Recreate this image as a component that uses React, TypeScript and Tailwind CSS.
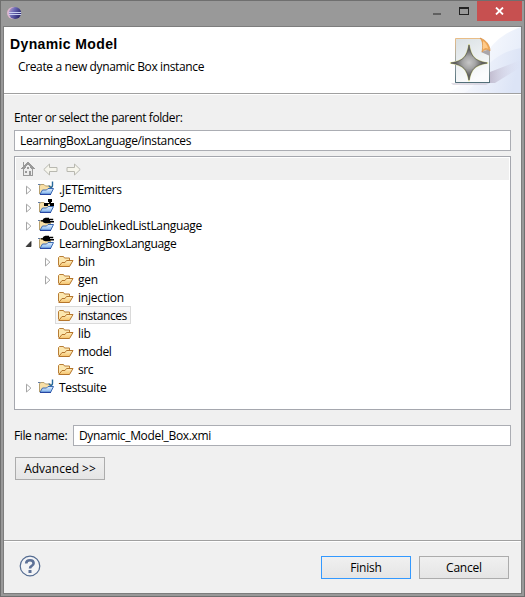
import React from "react";

const ui = "font-['Open_Sans','Noto_Sans',sans-serif]";

function EclipseIcon() {
  return (
    <svg width="15" height="14" viewBox="0 0 15 14">
      <defs>
        <linearGradient id="ecl" x1="0" y1="0" x2="1" y2="0.5">
          <stop offset="0" stopColor="#c9a4cc" />
          <stop offset="0.45" stopColor="#6a69b4" />
          <stop offset="1" stopColor="#2b2670" />
        </linearGradient>
      </defs>
      <ellipse cx="6.2" cy="6" rx="6.2" ry="6" fill="#dcb6cd" />
      <ellipse cx="8" cy="6" rx="6.2" ry="6" fill="url(#ecl)" />
      <path d="M1.8 5.5h12.4M1.8 7.5h12.4" stroke="#c9d0f0" strokeWidth="1" />
    </svg>
  );
}

function Banner() {
  return (
    <svg className="block" width="81" height="66" viewBox="0 0 81 66">
      <defs>
        <linearGradient id="bg1" x1="0" y1="0" x2="1" y2="0.3">
          <stop offset="0" stopColor="#ffffff" />
          <stop offset="0.4" stopColor="#fafbfe" />
          <stop offset="1" stopColor="#e8eefa" />
        </linearGradient>
        <linearGradient id="bg2" x1="0" y1="0" x2="1" y2="0.2">
          <stop offset="0" stopColor="#f9fafe" />
          <stop offset="1" stopColor="#dce4f6" />
        </linearGradient>
        <linearGradient id="shade" x1="0" y1="0" x2="1" y2="0">
          <stop offset="0" stopColor="#a99db5" stopOpacity="0.6" />
          <stop offset="1" stopColor="#d8d5eb" stopOpacity="0" />
        </linearGradient>
        <linearGradient id="page" x1="0" y1="0" x2="0.4" y2="1">
          <stop offset="0" stopColor="#d9e0e3" />
          <stop offset="1" stopColor="#fbfcfd" />
        </linearGradient>
        <linearGradient id="edge" x1="0" y1="0" x2="0" y2="1">
          <stop offset="0" stopColor="#e9bd87" />
          <stop offset="0.5" stopColor="#9ba6a7" />
          <stop offset="1" stopColor="#526f79" />
        </linearGradient>
        <radialGradient id="star">
          <stop offset="0" stopColor="#c6c6c6" />
          <stop offset="0.35" stopColor="#a6a6a6" />
          <stop offset="0.7" stopColor="#686868" />
          <stop offset="1" stopColor="#484848" />
        </radialGradient>
      </defs>
      <path d="M81 0C64 6 54 14 46 27C36 45 23 60 6 66H81Z" fill="url(#bg1)" />
      <path d="M81 21C63 24 50 33 40 48C36 56 31 62 24 66H81Z" fill="url(#bg2)" />
      <path d="M50 56V45L81 33V40L55 56Z" fill="url(#shade)" />
      <path d="M11 56h39l-4 2H13Z" fill="#c6bdcb" opacity=".5" />
      <path d="M15.5 11.5H41L49.5 25V55.5H15.5Z" fill="url(#page)" stroke="url(#edge)" />
      <path d="M15.5 55.5H50" stroke="#526f79" />
      <path d="M41 25L50 29V22Z" fill="#aaa6aa" />
      <path d="M40 11C46 13 50 18 50 24C48 22 45 22 42 25C43 19 43 14 40 11Z" fill="#efa655" stroke="#d99148" strokeWidth=".7" />
      <path d="M43 14C46 16 47.5 18.5 48 21.5C46 20.5 44.5 21 43 22.5Z" fill="#ffca89" />
      <path d="M29 17C31 29 34 34 48 36C34 38 31 43 29 54C27 43 24 38 10 36C24 34 27 29 29 17Z" fill="url(#star)" stroke="#d8dc9b" strokeWidth="1.4" />
      <path d="M29 18C31 29 34 34 47 36C34 38 31 43 29 53C27 43 24 38 11 36C24 34 27 29 29 18Z" fill="url(#star)" stroke="#555" strokeWidth=".7" />
    </svg>
  );
}

function HomeIcon() {
  return (
    <svg width="14" height="16" viewBox="0 0 14 16" shapeRendering="crispEdges">
      <path d="M2.5 8V14.5H11.5V8L7 3Z" fill="#ededed" stroke="#999" />
      <path d="M.5 8.5L7 1.5L13.5 8.5M2.5 5V1" fill="none" stroke="#999" strokeWidth="1.4" />
      <path d="M6 6h2v2H6ZM4 10h2v2H4ZM8 10h2v5H8Z" fill="#999" />
    </svg>
  );
}

function NavArrow({ right = false }: { right?: boolean }) {
  return (
    <svg width="15" height="13" viewBox="0 0 15 13" className={right ? "-scale-x-100" : ""}>
      <path d="M.8 6.5L6.5 1V4.5H14V8.5H6.5V12Z" fill="#f6f5ec" stroke="#b8b8b0" />
    </svg>
  );
}

function Twisty({ open = false }: { open?: boolean }) {
  return (
    <svg width="8" height="10" viewBox="0 0 8 10">
      {open ? (
        <path d="M6 2.5V7.5H1.2Z" fill="#404040" stroke="#222" strokeWidth=".8" />
      ) : (
        <path d="M1.5 1.2V9L5.9 5.1Z" fill="#fff" stroke="#a5a5a5" />
      )}
    </svg>
  );
}

function FolderIcon() {
  return (
    <svg width="16" height="14" viewBox="0 0 16 14">
      <defs>
        <linearGradient id="fold" x1="0" y1="0" x2="0" y2="1">
          <stop offset="0" stopColor="#fff0c0" />
          <stop offset="1" stopColor="#f5c36c" />
        </linearGradient>
      </defs>
      <path d="M.5 10.5V2.5L1.5 1.5H5.5L6.5 3H11.5V6" fill="#fce7af" stroke="#b87d35" />
      <path d="M.8 11.5L4 7.5H7L8.5 5.5H15L11.5 11.5Z" fill="url(#fold)" stroke="#b5752b" strokeLinejoin="round" />
    </svg>
  );
}

type Badge = "j" | "graph" | "plug";

function ProjectIcon({ badge }: { badge: Badge }) {
  return (
    <svg width="17" height="16" viewBox="0 0 17 16">
      <defs>
        <linearGradient id="proj" x1="0" y1="0" x2="0" y2="1">
          <stop offset="0" stopColor="#e4f1fd" />
          <stop offset="1" stopColor="#7db1ee" />
        </linearGradient>
      </defs>
      <path d="M1.5 13V4.5L3 3.5H6L7.5 5H12.5V8" fill="#f8dfa6" stroke="#b7a06e" />
      <path d="M0 3.5H2.5" stroke="#647ca1" />
      <path d="M2 13.2L4.5 9H8.5L10 7.5H15.5L12.7 13.2Z" fill="url(#proj)" stroke="#3a69b3" strokeLinejoin="round" />
      <path d="M2 13.5H13" stroke="#2746a2" />
      {badge === "j" && <path d="M11 4.5Q11.3 6.3 12.8 6.3Q14.5 6.3 14.5 4.2V.5" fill="none" stroke="#28699b" strokeWidth="1.4" />}
      {badge === "graph" && <path d="M10 0h4v3h-1v1h3v3h-4V5h-2v2H6V4h5V3h-1Z" fill="#000" />}
      {badge === "plug" && <path d="M3 3.2H4.5Q5.2 1 7.5 .7H11V1.7H15.2V3.2H12V4H16V5.5H12V6.3H7.5Q5.5 6 4.5 4.5H3Z" fill="#000" />}
    </svg>
  );
}

interface Item {
  name: string;
  spacing: string;
  badge?: Badge;
  open?: boolean;
  leaf?: boolean;
  selected?: boolean;
}

const items: Item[] = [
  { name: ".JETEmitters", spacing: "tracking-[-0.3px]", badge: "j" },
  { name: "Demo", spacing: "tracking-[-0.5px]", badge: "graph" },
  { name: "DoubleLinkedListLanguage", spacing: "tracking-[-0.33px]", badge: "plug" },
  { name: "LearningBoxLanguage", spacing: "tracking-[-0.36px]", badge: "plug", open: true },
  { name: "bin", spacing: "tracking-[-0.3px]" },
  { name: "gen", spacing: "tracking-[-0.3px]" },
  { name: "injection", spacing: "tracking-[-0.2px]", leaf: true },
  { name: "instances", spacing: "tracking-[-0.42px]", leaf: true, selected: true },
  { name: "lib", spacing: "tracking-[-0.3px]", leaf: true },
  { name: "model", spacing: "tracking-[-0.4px]", leaf: true },
  { name: "src", spacing: "tracking-[-0.4px]", leaf: true },
  { name: "Testsuite", spacing: "tracking-[-0.35px]", badge: "j" },
];

function TreeRow({ item }: { item: Item }) {
  return (
    <div className={`flex h-[18px] items-center ${item.badge ? "pl-[9px]" : "pl-7"}`}>
      <div className="w-3 shrink-0 pt-[2px]">{!item.leaf && <Twisty open={item.open} />}</div>
      <div
        className={`flex h-[18px] items-center border pr-[3px] ${item.badge ? "" : "-ml-px pl-[2px]"} ${
          item.selected ? "border-[#dadada] bg-[#f7f7f7]" : "border-transparent"
        }`}
      >
        <div className={item.badge ? "w-[21px]" : "w-5 pt-px"}>
          {item.badge ? <ProjectIcon badge={item.badge} /> : <FolderIcon />}
        </div>
        <span className={`leading-[17px] ${item.spacing}`}>{item.name}</span>
      </div>
    </div>
  );
}

function Button({ children, primary = false }: { children: React.ReactNode; primary?: boolean }) {
  return (
    <button
      className={`flex h-[23px] w-[90px] items-center justify-center border bg-gradient-to-b from-[#f0f0f0] to-[#e5e5e5] pt-px ${
        primary ? "border-[#3399ff]" : "border-[#acacac]"
      }`}
    >
      {children}
    </button>
  );
}

export default function App() {
  return (
    <div className={`flex h-[597px] w-[525px] flex-col border border-[#6f6f6f] bg-[#999] px-[2px] pb-[2px] text-[12px] text-black ${ui}`}>
      <div className="flex h-[25px] shrink-0 items-start pl-1">
        <div className="pt-[6px]"><EclipseIcon /></div>
        <div className="ml-auto mr-2 mt-3 h-[2px] w-2 bg-[#606060]" />
        <div className="ml-[10px] mr-2 mt-[6px] h-2 w-[10px] border border-t-2 border-[#222]" />
        <div className="flex h-5 w-[45px] items-center justify-center bg-[#c75050]">
          <svg width="9" height="8" viewBox="0 0 9 8"><path d="M1 .5L8 7.5M8 .5L1 7.5" stroke="#fff" strokeWidth="1.8" /></svg>
        </div>
      </div>
      <div className="flex min-h-0 flex-1 flex-col border border-[#7d7d7d] bg-[#f0f0f0]">
        <header className="flex h-[66px] shrink-0 justify-between bg-white">
          <div className="pl-[6px] pt-[9px]">
            <h1 className="font-['Liberation_Sans',sans-serif] text-[14px] font-bold leading-4 tracking-[0.38px]">Dynamic Model</h1>
            <p className="pl-2 pt-[7px] leading-4 tracking-[-0.36px]">Create a new dynamic Box instance</p>
          </div>
          <Banner />
        </header>
        <div className="h-[2px] shrink-0 border-t border-[#a0a0a0] bg-white" />
        <main className="flex flex-1 flex-col px-[10px]">
          <label className="mt-[15px] leading-4 tracking-[-0.4px]">Enter or select the parent folder:</label>
          <div className="mt-1 flex h-[21px] items-center border border-[#abadb3] bg-white pl-[5px] pt-px tracking-[-0.35px]">LearningBoxLanguage/instances</div>
          <section className="mt-[5px] h-[254px] border border-[#a5a7ae] bg-white p-px">
            <div className="flex h-[22px] items-center bg-[#f0f0f0] pl-[5px]">
              <HomeIcon />
              <div className="ml-2"><NavArrow /></div>
              <div className="ml-2"><NavArrow right /></div>
            </div>
            {items.map((item) => <TreeRow key={item.name} item={item} />)}
          </section>
          <div className="mt-[15px] flex h-[21px] items-center">
            <label className="w-[59px] pt-px tracking-[-0.4px]">File name:</label>
            <div className="flex h-full flex-1 items-center border border-[#abadb3] bg-white pl-[5px] pt-px tracking-[-0.34px]">Dynamic_Model_Box.xmi</div>
          </div>
          <div className="ml-px mt-[11px]"><Button>Advanced &gt;&gt;</Button></div>
        </main>
        <footer className="flex h-[53px] shrink-0 items-start border-t border-[#a0a0a0]">
          <div className="flex h-full w-full items-start border-t border-white pr-3">
            <svg className="ml-[15px] mt-[13px]" width="22" height="23" viewBox="0 0 22 23">
              <circle cx="11" cy="11" r="9.8" fill="#f3f4f6" stroke="#536b91" strokeWidth="1.2" />
              <path d="M7.2 8.5Q7.2 5.2 11 5.2Q14.6 5.2 14.6 8.2Q14.6 9.9 12.8 10.8Q11 11.7 11 13.5" fill="none" stroke="#5d7197" strokeWidth="2.6" />
              <path d="M9.5 15h3v3h-3Z" fill="#5d7197" />
            </svg>
            <div className="ml-auto mt-[14px] flex gap-2 tracking-[-0.2px]">
              <Button primary>Finish</Button>
              <Button>Cancel</Button>
            </div>
          </div>
        </footer>
      </div>
    </div>
  );
}
